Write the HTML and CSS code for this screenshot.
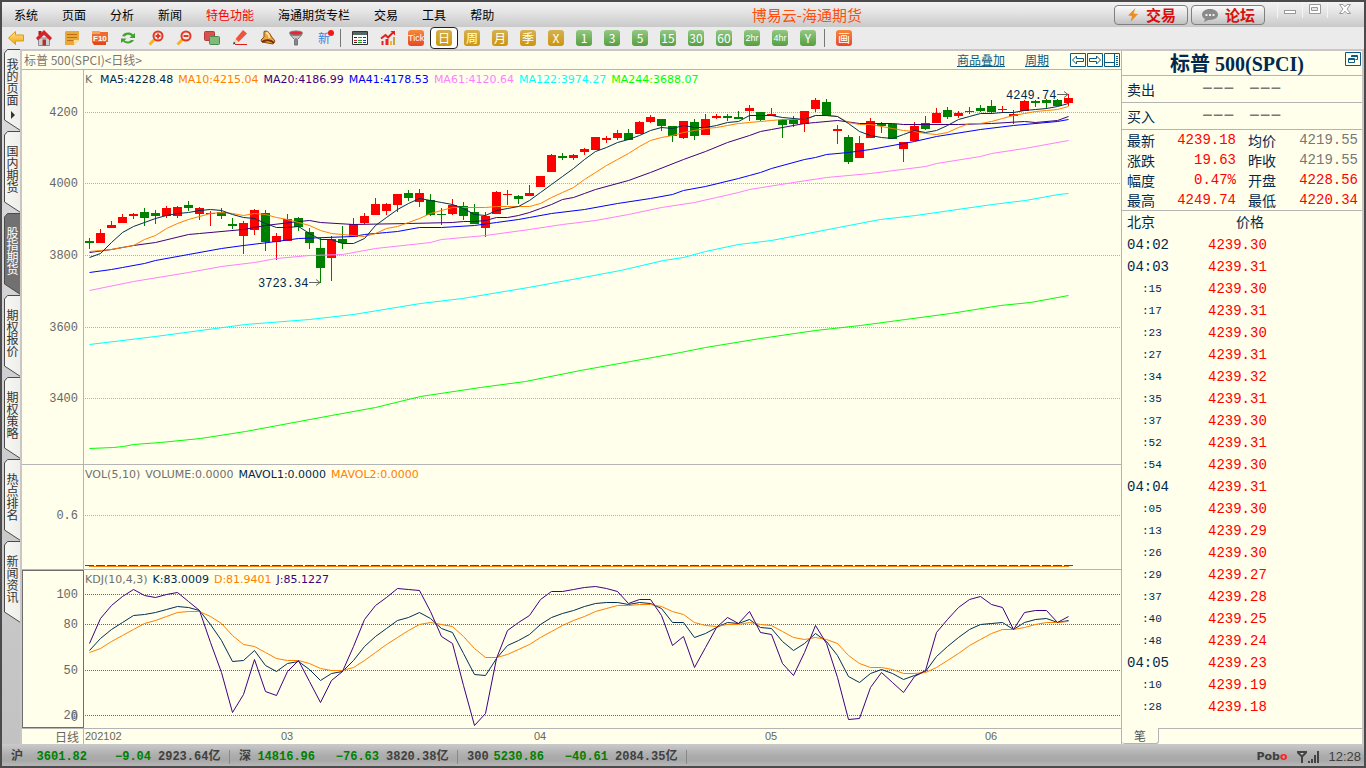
FILE: index.html
```html
<!DOCTYPE html>
<html lang="zh-CN">
<head>
<meta charset="utf-8">
<title>博易云-海通期货</title>
<link rel="stylesheet" href="styles.css">
</head>
<body>
<svg class="defs" aria-hidden="true">
  <defs>
    <linearGradient id="g-gold" x2="0" y2="1"><stop offset="0" stop-color="#ffe680"/><stop offset="1" stop-color="#f2a416"/></linearGradient>
    <linearGradient id="g-tab" x2="1" y2="0"><stop offset="0" stop-color="#f6f6f4"/><stop offset="1" stop-color="#eeeeea"/></linearGradient>
    <symbol id="tab" viewBox="0 0 16 84"><path d="M16.5 .5H3.500L.5 4V71L16.500 81.500" stroke="#4a4a4a"/></symbol>
  </defs>
</svg>
<div class="window">
  <header class="menubar">
    <nav class="menus">
      <button>系统</button><button>页面</button><button>分析</button><button>新闻</button><button class="hot">特色功能</button><button>海通期货专栏</button><button>交易</button><button>工具</button><button>帮助</button>
    </nav>
    <h1 class="app-title">博易云-海通期货</h1>
    <div class="head-actions">
      <button class="pill"><svg width="14" height="16" viewBox="0 0 14 16"><path d="M9.500 1L2 8.500L6 9L4.500 15L12 7L7.500 6.500Z" fill="#f08c1c"/></svg>交易</button>
      <button class="pill"><svg width="18" height="16" viewBox="0 0 18 16"><path d="M9 2C4 2 1 4.500 1 7.500C1 9.500 2.500 11 4 12L3 15L7.500 12.900C13 13.200 17 11 17 7.500C17 4.500 14 2 9 2Z" fill="#8a8a8a"/><path d="M4.500 7h2v2h-2zM8 7h2v2h-2zM11.500 7h2v2h-2z" fill="#eee"/></svg>论坛</button>
    </div>
    <div class="win-ctl">
      <button aria-label="最小化"><svg width="14" height="14" viewBox="0 0 14 14"><rect x="1.500" y="8.500" width="11" height="3" fill="#fff" stroke="#999"/></svg></button>
      <button aria-label="最大化"><svg width="14" height="14" viewBox="0 0 14 14"><path d="M1.500 2.500h11v9h-11zM3.500 5.500h6v3h-6z" fill="#fff" fill-rule="evenodd" stroke="#999"/></svg></button>
      <button aria-label="关闭"><svg width="14" height="14" viewBox="0 0 14 14"><path d="M1.500 2.500h3.500L7 4.800L9 2.500h3.500L9 7l3.500 4.500H9L7 9.200L5 11.500H1.500L5 7Z" fill="#fff" stroke="#999"/></svg></button>
    </div>
  </header>

  <div class="toolbar" role="toolbar">
    <button class="tool" aria-label="后退"><svg viewBox="0 0 16 16"><path d="M.5 8L7.500 1.500V5H15.500V11H7.500V14.500Z" fill="url(#g-gold)" stroke="#dd9a18"/></svg></button>
    <button class="tool" aria-label="主页"><svg viewBox="0 0 16 16"><path d="M2.500 8h11v7.500h-11z" fill="#cfcfd2" stroke="#8a8a8a"/><path d="M2.500 1h3v4h-3z" fill="#a81c22"/><path d="M8 0L0 8L2 10.500L8 5L14 10.500L16 8Z" fill="#d5232a"/><path d="M6.500 9.500h3.500v6H6.500z" fill="#a33"/></svg></button>
    <button class="tool" aria-label="公告"><svg viewBox="0 0 16 16"><path d="M2 1H15V10L10 15H1V2Z" fill="#e8a83a"/><path d="M10 15V10H15Z" fill="#ffe0a0"/><path d="M3 4.500h10M3 7.500h10M3 10.500h6" stroke="#bb6f12"/></svg></button>
    <button class="tool" aria-label="F10"><svg viewBox="0 0 16 16"><path d="M0 2h16v10H0z" fill="#ef6a2e"/><path d="M0 1h8v3H0z" fill="#f7a35b"/><path d="M0 12h14v3H2z" fill="#e04b1c"/><text x="1" y="11" font-size="8" font-weight="700" fill="#fff">F10</text></svg></button>
    <button class="tool" aria-label="刷新"><svg viewBox="0 0 16 16"><path d="M2 6C4 2 10 1.500 13 4.500L15 3V8H9.500L11.500 6C9 4 6 4.500 5 6.500ZM14 10C12 14 6 14.500 3 11.500L1 13V8.500H6.500L4.500 10.500C7 12.300 10 11.500 11 10Z" fill="#41a52d"/></svg></button>
    <button class="tool" aria-label="放大"><svg viewBox="0 0 16 16"><path d="M1.500 14.500L6.500 9.500" stroke="#f6b51e" stroke-width="3"/><circle cx="10" cy="6" r="4.500" fill="#fde9e4" stroke="#df3a26" stroke-width="2"/><path d="M7.500 6h5M10 3.500v5" stroke="#df3a26" stroke-width="2"/></svg></button>
    <button class="tool" aria-label="缩小"><svg viewBox="0 0 16 16"><path d="M1.500 14.500L6.500 9.500" stroke="#f6b51e" stroke-width="3"/><circle cx="10" cy="6" r="4.500" fill="#fde9e4" stroke="#df3a26" stroke-width="2"/><path d="M7.500 6h5" stroke="#df3a26" stroke-width="2"/></svg></button>
    <button class="tool" aria-label="叠加"><svg viewBox="0 0 16 16"><rect x=".5" y="1.500" width="10" height="9" rx="1" fill="#d95050" stroke="#b83a3a"/><rect x="5.500" y="6.500" width="10" height="8" rx="1" fill="#80b97c" stroke="#4a8b4a"/></svg></button>
    <button class="tool" aria-label="画线"><svg viewBox="0 0 16 16"><path d="M11 0L15 3.500L6.500 12L3.500 9Z" fill="#ef5340"/><path d="M3.500 9L6.500 12L1.500 13.500Z" fill="#ffd2a0"/><path d="M1 14.500l2.500-1-1.500-2z" fill="#333"/><path d="M3 14.500h12" stroke="#d81e1e"/></svg></button>
    <button class="tool" aria-label="预警"><svg viewBox="0 0 16 16"><path d="M4 1.500C7 0 10 3 11 6L15 11L13 14L2 12L1 10L4 7Z" fill="#e9a63c" stroke="#8c4a16"/><path d="M6 3C8 3 9 5 9.500 8" stroke="#ffe2a0" stroke-width="2" fill="none"/><path d="M2 12C6 9 11 10 14 13" stroke="#7b2d12" stroke-width="2" fill="none"/></svg></button>
    <button class="tool" aria-label="过滤"><svg viewBox="0 0 16 16"><ellipse cx="8" cy="3" rx="6.500" ry="2" fill="#e23" stroke="#777"/><path d="M2 4.500C4 6 12 6 14 4.500L9.500 9.500V15H6.500V9.500Z" fill="#c8ccd0" stroke="#777"/><path d="M8 8v7" stroke="#444"/></svg></button>
    <button class="tool news" aria-label="新功能">新<i></i></button>
    <span class="sep"></span>
    <button class="tool" aria-label="报价"><svg viewBox="0 0 16 16"><path d="M.5 1.500h15v13H.5z" fill="#fff" stroke="#333"/><path d="M1 2h14v3H1z" fill="#566"/><path d="M2 7.500h3M2 12.500h3" stroke="#222"/><path d="M6 7.500h4M6 10.500h4M6 12.500h4" stroke="#2a9a2a"/><path d="M11 7.500h3M11 10.500h3M11 12.500h3" stroke="#1b3b9c"/><path d="M2 10.500h3" stroke="#d22"/></svg></button>
    <button class="tool" aria-label="走势"><svg viewBox="0 0 16 16"><path d="M1.500 15V11h2v4zM5.500 15V9h3v6z" fill="#e22"/><path d="M10 15v-4h2v4z" fill="#f3b92c"/><path d="M13 15V7h2v8z" fill="#c9a23a"/><path d="M1 8.500L5.500 5L8 7.500L14 1.500" stroke="#e0201a" stroke-width="2" fill="none"/><path d="M10.500 1H15V5.500Z" fill="#e0201a"/></svg></button>
    <button class="tool"><b class="sq orange small">Tick</b></button>
    <button class="tool selected"><b class="sq gold">日</b></button>
    <button class="tool"><b class="sq gold">周</b></button>
    <button class="tool"><b class="sq gold">月</b></button>
    <button class="tool"><b class="sq gold">季</b></button>
    <button class="tool"><b class="sq gold">X</b></button>
    <button class="tool"><b class="sq green">1</b></button>
    <button class="tool"><b class="sq green">3</b></button>
    <button class="tool"><b class="sq green">5</b></button>
    <button class="tool"><b class="sq green">15</b></button>
    <button class="tool"><b class="sq green">30</b></button>
    <button class="tool"><b class="sq green">60</b></button>
    <button class="tool"><b class="sq green small">2hr</b></button>
    <button class="tool"><b class="sq green small">4hr</b></button>
    <button class="tool"><b class="sq green">Y</b></button>
    <span class="sep"></span>
    <button class="tool"><b class="sq orange">画</b></button>
  </div>

  <main class="main">
    <nav class="rail">
      <button class="rtab first"><svg><use href="#tab"/></svg><span>我的页面</span><i class="tri"></i></button>
      <button class="rtab"><svg><use href="#tab"/></svg><span>国内期货</span></button>
      <button class="rtab on"><svg><use href="#tab"/></svg><span>股指期货</span></button>
      <button class="rtab"><svg><use href="#tab"/></svg><span>期权报价</span></button>
      <button class="rtab"><svg><use href="#tab"/></svg><span>期权策略</span></button>
      <button class="rtab"><svg><use href="#tab"/></svg><span>热点排名</span></button>
      <button class="rtab"><svg><use href="#tab"/></svg><span>新闻资讯</span></button>
    </nav>

    <div class="content">
      <section class="charts">
        <div class="chart-head">
          <span class="symbol">标普 500(SPCI)&lt;日线&gt;</span>
          <a href="#" class="overlay-link">商品叠加</a>
          <a href="#" class="period-link">周期</a>
          <span class="head-icons">
            <button aria-label="左移"><svg viewBox="0 0 16 14"><path d="M.5 .5h15v13H.5z"/><path d="M2.500 7L6.500 3V5.500H13.500V8.500H6.500V11Z"/></svg></button>
            <button aria-label="右移"><svg viewBox="0 0 16 14"><path d="M.5 .5h15v13H.5z"/><path d="M13.500 7L9.500 3V5.500H2.500V8.500H9.500V11Z"/></svg></button>
            <button aria-label="布局"><svg viewBox="0 0 16 14"><path d="M.5 .5h15v13H.5zM10.500 .5v13M.5 9.500h10"/><path d="M12 3.500h2M12 5.500h2M12 7.500h2M12 9.500h2M12 11.500h2"/></svg></button>
          </span>
        </div>

        <div class="pane">
          <svg class="axis" viewBox="22 70 61 394" preserveAspectRatio="none">
            <text x="78" y="116">4200</text><text x="78" y="187">4000</text><text x="78" y="259">3800</text><text x="78" y="331">3600</text><text x="78" y="402">3400</text>
          </svg>
          <div class="plot">
            <svg viewBox="84 70 1037 394" preserveAspectRatio="none">
              <path class="grid" d="M85 112.500H1121M85 183.500H1121M85 255.500H1121M85 327.500H1121M85 398.500H1121"/>
              <g id="candles" class="crisp"></g>
              <g id="averages" class="lines"></g>
              <text class="note" x="258" y="287">3723.34</text>
              <path class="pointer" d="M309 282.500H320M316 279.500L320 282.500L316 285.500"/>
              <text class="note" x="1006" y="99">4249.74</text>
              <path class="pointer" d="M1057 94.500H1068M1064 91.500L1068 94.500L1064 97.500"/>
            </svg>
            <div class="legend"><span class="c-dim k-label">K</span><span class="c-navy">MA5:4228.48</span><span class="c-orange">MA10:4215.04</span><span class="c-purple">MA20:4186.99</span><span class="c-blue">MA41:4178.53</span><span class="c-pink">MA61:4120.64</span><span class="c-cyan">MA122:3974.27</span><span class="c-lime">MA244:3688.07</span></div>
          </div>
        </div>

        <div class="pane">
          <svg class="axis" viewBox="22 465 61 104" preserveAspectRatio="none"><text x="78" y="519">0.6</text></svg>
          <div class="plot">
            <svg viewBox="84 465 1037 104" preserveAspectRatio="none">
              <path class="grid" d="M85 515.500H1121"/>
              <g id="volume" class="crisp"></g>
            </svg>
            <div class="legend"><span class="c-dim">VOL(5,10)</span><span class="c-dim">VOLUME:0.0000</span><span class="c-navy">MAVOL1:0.0000</span><span class="c-orange">MAVOL2:0.0000</span></div>
          </div>
        </div>

        <div class="pane">
          <svg class="axis boxed" viewBox="23 571 60 156" preserveAspectRatio="none">
            <text x="78" y="598">100</text><text x="78" y="628">80</text><text x="78" y="674">50</text><text x="78" y="719">20</text><text x="78" y="721">0</text>
          </svg>
          <div class="plot">
            <svg viewBox="84 570 1037 158" preserveAspectRatio="none">
              <path class="grid dark" d="M85 594.500H1121M85 624.500H1121M85 670.500H1121M85 715.500H1121"/>
              <g id="kdj" class="lines"></g>
            </svg>
            <div class="legend"><span class="c-dim">KDJ(10,4,3)</span><span class="c-navy">K:83.0009</span><span class="c-orange">D:81.9401</span><span class="c-purple">J:85.1227</span></div>
          </div>
        </div>

        <div class="dates">
          <span class="unit">日线</span>
          <svg viewBox="84 729 1037 15" preserveAspectRatio="none">
            <text x="85" y="740">202102</text><text x="281" y="740">03</text><text x="534" y="740">04</text><text x="765" y="740">05</text><text x="985" y="740">06</text>
          </svg>
        </div>
      </section>

      <aside class="quote">
        <div class="q-title"><h2>标普 500(SPCI)</h2>
          <button aria-label="弹出"><svg viewBox="0 0 16 14"><path d="M.5 .5h15v13H.5z"/><path d="M6.500 5V3.500H12.500V7.500H10.500M3.500 6.500H9.500V10.500H3.500ZM3.500 7.500h6M6.500 4.500h6"/></svg></button>
        </div>
        <div class="bidask"><span>卖出</span><em>−−−</em><em>−−−</em></div>
        <div class="bidask"><span>买入</span><em>−−−</em><em>−−−</em></div>
        <table class="stats">
          <tr><th>最新</th><td class="up">4239.18</td><th>均价</th><td>4219.55</td></tr>
          <tr><th>涨跌</th><td class="up">19.63</td><th>昨收</th><td>4219.55</td></tr>
          <tr><th>幅度</th><td class="up">0.47%</td><th>开盘</th><td class="up">4228.56</td></tr>
          <tr><th>最高</th><td class="up">4249.74</td><th>最低</th><td class="up">4220.34</td></tr>
        </table>
        <table class="ticks">
          <thead><tr><th>北京</th><th>价格</th></tr></thead>
          <tbody>
            <tr><td>04:02</td><td>4239.30</td></tr>
            <tr><td>04:03</td><td>4239.31</td></tr>
            <tr class="s"><td>:15</td><td>4239.30</td></tr>
            <tr class="s"><td>:17</td><td>4239.31</td></tr>
            <tr class="s"><td>:23</td><td>4239.30</td></tr>
            <tr class="s"><td>:27</td><td>4239.31</td></tr>
            <tr class="s"><td>:34</td><td>4239.32</td></tr>
            <tr class="s"><td>:35</td><td>4239.31</td></tr>
            <tr class="s"><td>:37</td><td>4239.30</td></tr>
            <tr class="s"><td>:52</td><td>4239.31</td></tr>
            <tr class="s"><td>:54</td><td>4239.30</td></tr>
            <tr><td>04:04</td><td>4239.31</td></tr>
            <tr class="s"><td>:05</td><td>4239.30</td></tr>
            <tr class="s"><td>:13</td><td>4239.29</td></tr>
            <tr class="s"><td>:26</td><td>4239.30</td></tr>
            <tr class="s"><td>:29</td><td>4239.27</td></tr>
            <tr class="s"><td>:37</td><td>4239.28</td></tr>
            <tr class="s"><td>:40</td><td>4239.25</td></tr>
            <tr class="s"><td>:48</td><td>4239.24</td></tr>
            <tr><td>04:05</td><td>4239.23</td></tr>
            <tr class="s"><td>:10</td><td>4239.19</td></tr>
            <tr class="s"><td>:28</td><td>4239.18</td></tr>
          </tbody>
        </table>
        <div class="q-tabs"><button>笔</button><span></span></div>
      </aside>
    </div>
  </main>

  <footer class="status">
    <div class="index"><span>沪</span><b>3601.82</b><b>−9.04</b><span class="amt">2923.64亿</span></div>
    <div class="index"><span>深</span><b>14816.96</b><b>−76.63</b><span class="amt">3820.38亿</span></div>
    <div class="index wide"><span>300</span><b>5230.86</b><b>−40.61</b><span class="amt">2084.35亿</span></div>
    <div class="brand">Pob<i>o</i></div>
    <svg class="signal" width="22" height="14" viewBox="0 0 22 14"><path d="M0 1h10v2L6 7v6H4V7L0 3z" fill="#444"/><path d="M3 3h4L5 5z" fill="#ccc"/><path d="M11 11h2v2h-2zM14 9h2v4h-2zM17 5h2v8h-2zM20 1h2v12h-2z" fill="#444"/></svg>
    <time>12:28</time>
  </footer>
</div>
<script src="app.js"></script>
</body>
</html>
```

FILE: styles.css
```css
* { box-sizing: border-box; }
html, body { height: 100%; margin: 0; }
body {
  font-family: "Noto Sans CJK SC", "Liberation Sans", sans-serif;
  font-size: 12px;
  line-height: 16px;
  color: #000;
  overflow: hidden;
}
button {
  font: inherit;
  color: inherit;
  background: none;
  border: 0;
  padding: 0;
  margin: 0;
  cursor: pointer;
}
h1, h2 { margin: 0; font-weight: 400; }
i, em { font-style: normal; }
svg { display: block; }
.defs { position: absolute; width: 0; height: 0; }

.window {
  height: 100vh;
  display: flex;
  flex-direction: column;
  border: 2px solid #4c4a4b;
  background: #d2d2d4;
}

/* menu bar */
.menubar {
  height: 25px;
  flex: none;
  display: flex;
  align-items: center;
  background: linear-gradient(#f2f2f2, #e4e4e4 40%, #c9c9c9);
}
.menus { display: flex; gap: 24px; padding-left: 12px; white-space: nowrap; }
.hot { color: #f00; }
.app-title { font-size: 15px; line-height: 22px; color: #ff4e0c; margin: 0 252px 0 auto; white-space: nowrap; }
.head-actions { display: flex; gap: 3px; margin-right: 12px; }
.pill {
  display: flex;
  align-items: center;
  justify-content: center;
  gap: 6px;
  width: 74px;
  height: 20px;
  font-size: 15px;
  font-weight: 700;
  color: #d8100c;
  border: 1px solid #808080;
  border-radius: 4px;
  background: linear-gradient(#fafafa, #e0e0e0 50%, #c2c2c2);
}
.win-ctl { display: flex; padding-right: 3px; align-self: start; }
.win-ctl button { width: 25px; height: 16px; border-left: 1px solid #f4f4f4; display: flex; justify-content: center; }
.win-ctl button:last-child { width: 34px; }

/* toolbar */
.toolbar { height: 22px; flex: none; display: flex; align-items: center; background: #ebebeb; }
.tool { width: 28px; height: 22px; flex: none; display: flex; align-items: center; justify-content: center; }
.tool svg { width: 16px; height: 16px; }
.tool svg text { font-family: "Liberation Sans", sans-serif; }
.tool.selected { border: 1px solid #222; border-radius: 4px; background: #fff; }
.news { position: relative; color: #3a86e0; }
.news i { position: absolute; right: 4px; top: 3px; width: 6px; height: 6px; border-radius: 50%; background: #f01818; }
.sep { width: 8px; height: 18px; flex: none; background: linear-gradient(#777, #777) 2px 0 / 1px 100% no-repeat; }
.sq {
  width: 16px;
  height: 16px;
  border-radius: 3px;
  font-size: 12px;
  line-height: 16px;
  font-weight: 400;
  text-align: center;
  color: #fff;
  overflow: hidden;
}
.gold { background: linear-gradient(#d3b155, #cf9509); }
.green { background: linear-gradient(#93c883, #55a040); }
.orange { background: linear-gradient(#f58a3c, #ea4524); }
.sq.small { font-family: "Liberation Sans", sans-serif; font-size: 9px; }

/* main frame */
.main { flex: 1; min-height: 0; display: flex; }
.rail {
  width: 18px;
  flex: none;
  padding-left: 2px;
  background: linear-gradient(#dcdce0, #c2c2c2);
}
.rtab {
  position: relative;
  display: flex;
  align-items: flex-start;
  width: 16px;
  height: 82px;
  padding-top: 14px;
  color: #333;
}
.rtab svg { position: absolute; left: 0; top: 0; width: 16px; height: 84px; fill: url(#g-tab); }
.rtab span { position: relative; writing-mode: vertical-rl; line-height: 16px; height: 48px; }
.rtab.first { padding-top: 9px; }
.rtab.on { color: #fff; }
.rtab.on svg { fill: #717171; }
.tri { position: absolute; left: 7px; top: 62px; border: 4px solid transparent; border-left-color: #333; border-right: 0; }

.content {
  flex: 1;
  min-width: 0;
  display: flex;
  border: 2px solid #ccc5c5;
  border-bottom: 0;
  background: #ffffeb;
}
.charts {
  flex: 1;
  min-width: 0;
  display: grid;
  grid-template-rows: 19px minmax(0, 395fr) minmax(0, 105fr) minmax(0, 159fr) 15px;
}
.chart-head { display: flex; align-items: center; border-bottom: 1px solid #b4b4b4; padding-left: 2px; color: #777; }
.symbol { flex: 1; }
.chart-head a { color: #0b5a86; }
.overlay-link { margin-right: 20px; }
.period-link { margin-right: 21px; }
.head-icons { display: flex; gap: 1px; margin-right: 1px; }
.head-icons svg, .q-title svg { width: 16px; height: 14px; fill: none; stroke: #0b5a86; }

.pane { display: grid; grid-template-columns: 62px minmax(0, 1fr); border-bottom: 1px solid #b4b4b4; }
.axis { width: 100%; height: 100%; border-right: 1px solid #b4b4b4; min-height: 0; }
.axis text { font: 12px "Liberation Mono", monospace; fill: #666; text-anchor: end; }
.axis.boxed { border: 1px solid #6e6e6e; }
.plot { display: grid; min-width: 0; min-height: 0; }
.plot > * { grid-area: 1 / 1; min-width: 0; min-height: 0; }
.plot svg { width: 100%; height: 100%; }
.grid { fill: none; stroke: #b2b2a8; stroke-dasharray: 1 1; shape-rendering: crispEdges; }
.grid.dark { stroke: #6a6a62; }
.crisp { shape-rendering: crispEdges; }
.lines polyline { fill: none; stroke-width: 1; }
.note { font: 12px "Liberation Mono", monospace; fill: #002850; }
.pointer { fill: none; stroke: #666; }
.legend {
  display: flex;
  gap: 5px;
  padding-left: 1px;
  font-family: "DejaVu Sans", sans-serif;
  font-size: 11px;
  line-height: 19px;
  white-space: nowrap;
  align-self: start;
}
.k-label { width: 10px; }
.c-dim { color: #707070; }
.c-navy { color: #002850; }
.c-orange { color: #ff8000; }
.c-purple { color: #400080; }
.c-blue { color: #00f; }
.c-pink { color: #ff80ff; }
.c-cyan { color: #0ff; }
.c-lime { color: #0f0; }
.dates { display: grid; grid-template-columns: 62px minmax(0, 1fr); color: #666; }
.unit { text-align: right; padding-right: 4px; line-height: 15px; border-right: 1px solid #b4b4b4; }
.dates svg { width: 100%; height: 15px; }
.dates text { font: 11px "Liberation Sans", sans-serif; fill: #666; }

/* quote panel */
.quote {
  width: 241px;
  flex: none;
  display: flex;
  flex-direction: column;
  border-left: 1px solid #b4b4b4;
  color: #002850;
  font-size: 14px;
}
.q-title { height: 25px; flex: none; display: grid; grid-template-columns: 16px 1fr 16px; padding: 1px 1px 0; border-bottom: 1px solid #b4b4b4; }
.q-title h2 { grid-column: 2; font: 700 20px/24px "Liberation Serif", "Noto Sans CJK SC", serif; text-align: center; padding-right: 10px; }
.q-title button { align-self: start; }
.bidask { height: 27px; flex: none; display: flex; align-items: center; padding-left: 5px; border-bottom: 1px solid #b4b4b4; }
.bidask span { width: 75px; }
.bidask em { width: 47px; font: 18px/20px "Liberation Mono", monospace; color: #777; }
table { border-collapse: collapse; }
th, td { padding: 0; font-weight: 400; text-align: left; }
td { font-family: "Liberation Mono", monospace; }
.stats { table-layout: fixed; width: 100%; height: 81px; flex: none; border-bottom: 1px solid #b4b4b4; }
.stats th { width: 40px; padding-left: 5px; line-height: 20px; height: 20px; }
.stats th:nth-child(3) { width: 53px; padding-left: 12px; }
.stats td { width: 74px; text-align: right; color: #777; }
.stats td:last-child { width: auto; padding-right: 4px; }
.stats .up, .ticks td:last-child { color: #f00; }
.ticks { flex: none; }
.ticks td, .ticks th { height: 22px; padding-left: 5px; line-height: 20px; }
.ticks th { height: 23px; vertical-align: top; }
.ticks th:first-child, .ticks td:first-child { width: 86px; }
.ticks th:last-child { padding-left: 28px; }
.ticks td:last-child { padding-left: 0; }
.ticks .s td:first-child { font-size: 11px; padding-left: 20px; }
.q-tabs { height: 16px; margin-top: auto; flex: none; display: flex; font-size: 12px; color: #555; }
.q-tabs button { width: 37px; line-height: 15px; border: 1px solid #b4b4b4; border-width: 0 1px 1px 0; border-radius: 0 0 3px 3px; }
.q-tabs span { flex: 1; border-top: 1px solid #b4b4b4; }

/* status bar */
.status {
  height: 22px;
  flex: none;
  display: flex;
  align-items: center;
  padding: 3px 3px 0 9px;
  background: linear-gradient(#cacaca, #adadad 50%, #a8a8a8 75%, #b8b8b8);
  color: #404040;
  font-family: "Liberation Mono", "Noto Sans CJK SC", monospace;
  font-weight: 700;
}
.index { display: flex; margin-right: 9px; border-right: 1px solid #888; line-height: 14px; white-space: nowrap; }
.index span:first-child { width: 12px; }
.index b { width: 64px; text-align: right; color: #008000; }
.index .amt { width: 78px; padding-left: 7px; }
.index.wide span:first-child { width: 22px; }
.index.wide b:nth-of-type(1) { width: 55px; }
.brand { margin-left: auto; font-family: "DejaVu Sans", sans-serif; font-size: 11px; }
.brand i { color: #f22; }
.signal { margin: 0 9px 0 10px; }
time { font: 13px "Liberation Sans", sans-serif; }
```

FILE: app.js
```js
(function () {
  var NS = "http://www.w3.org/2000/svg";
  var X0 = 89, STEP = 11;
  var COLORS = { r: "#ff0000", g: "#008000" };

  function add(parent, name, attrs) {
    var el = document.createElementNS(NS, name);
    for (var k in attrs) el.setAttribute(k, attrs[k]);
    parent.appendChild(el);
  }

  // direction, high, body top, body bottom, low
  var candles = ("g238,241,243,249 r229,233,243,243 r221,225,228,228 r214,217,223,223 r213,214,216,219 " +
    "g208,212,218,226 g210,213,216,224 r206,208,216,218 r206,207,216,218 g201,205,208,211 " +
    "r207,208,214,220 r211,213,214,226 g208,212,216,219 g218,224,226,229 r221,223,236,254 " +
    "r209,210,230,235 g210,213,242,251 r233,236,242,260 r214,219,241,241 g217,218,227,231 " +
    "g228,232,243,249 g238,248,268,283 r236,239,258,281 g226,239,243,249 r218,224,237,237 " +
    "r213,216,223,224 r198,204,215,215 r203,204,211,215 r194,194,205,212 g190,193,198,201 " +
    "r189,193,202,207 g194,200,215,216 g208,214,215,225 r199,205,214,215 g202,206,216,220 " +
    "g204,212,224,224 r212,216,228,237 r191,192,214,214 r190,194,195,205 g195,196,199,204 " +
    "r185,193,196,196 r176,176,187,187 r154,155,172,172 g153,156,158,160 r154,155,158,160 " +
    "r148,149,152,155 r137,137,150,150 r136,138,140,143 r130,133,138,140 g129,133,140,140 " +
    "r121,122,134,134 r115,117,122,123 g119,119,126,131 g126,126,136,142 r121,121,138,139 " +
    "g119,122,136,140 r114,119,135,135 r114,116,118,119 g114,116,118,121 g111,117,119,119 " +
    "r105,108,111,121 g112,112,120,121 r108,114,116,116 g119,120,125,138 g116,120,124,127 " +
    "r111,111,124,132 r98,100,109,112 g99,102,116,116 r125,129,131,144 g135,137,162,164 " +
    "r136,143,158,158 r118,121,138,138 g122,124,126,133 g124,124,139,139 r142,142,149,162 " +
    "r122,126,141,141 g116,123,129,130 r108,113,123,123 g107,110,117,119 r111,113,116,118 " +
    "g107,111,112,114 g105,108,111,112 g100,106,112,114 r106,109,110,113 r110,114,116,124 " +
    "r100,101,111,111 g100,101,103,107 g99,100,103,109 g99,100,106,106 r94,98,103,106").split(" ");

  var box = document.getElementById("candles");
  var vol = document.getElementById("volume");
  add(vol, "rect", { x: X0, y: 566, width: 980, height: 1, fill: "#ff8000" });
  candles.forEach(function (c, i) {
    var fill = COLORS[c.charAt(0)], v = c.slice(1).split(",").map(Number), x = X0 + STEP * i;
    add(box, "rect", { x: x, y: v[0], width: 1, height: v[3] - v[0], fill: fill });
    add(box, "rect", { x: x - 4, y: v[1], width: 9, height: v[2] - v[1], fill: fill });
    add(vol, "rect", { x: x - 4, y: 565, width: 9, height: 1, fill: fill });
  });

  // one value for each candle
  function series(id, color, text) {
    var pts = text.split(" ").map(function (y, i) { return (X0 + 0.5 + STEP * i) + "," + (+y + 0.5); });
    add(document.getElementById(id), "polyline", { points: pts.join(" "), stroke: color });
  }
  // explicit x,y vertices
  function curve(color, points) {
    add(document.getElementById("averages"), "polyline", { points: points, stroke: color, transform: "translate(.5 .5)" });
  }

  curve("#00ff00", "89,448 113,447 123,446 133,444 160,442 200,438 245,431 331,415 375,407 420,396 480,387 525,381 580,370 630,361 680,352 705,347 760,338 815,330 860,325 905,319 950,313 1000,305 1030,302 1068,295");
  curve("#00ffff", "89,344 155,336 245,324 309,319 353,314 420,303 462,298 528,287 572,279 620,270 663,260 683,257 705,251 738,244 771,240 838,227 880,219 915,215 957,209 992,204 1025,200 1058,194 1068,193");
  curve("#ff80ff", "89,290 133,281 188,272 221,266 254,262 276,258 309,255 342,254 375,248 430,242 441,239 485,235 529,229 562,224 595,220 628,214 661,207 694,202 716,197 738,192 749,189 793,182 826,177 870,173 925,166 936,163 980,156 991,153 1024,148 1068,140");
  curve("#0000ff", "89,272 111,269 122,267 144,263 155,260 188,254 221,248 243,245 276,241 298,238 353,236 364,234 386,232 397,231 419,227 441,227 474,225 496,222 518,219 529,217 551,213 584,209 617,203 650,198 672,194 683,190 705,186 738,178 749,175 760,172 771,168 804,159 815,157 826,154 848,152 870,149 914,141 936,136 980,129 1013,125 1057,121 1068,119");
  curve("#400080", "89,252 111,249 133,245 155,242 188,234 199,233 243,229 265,225 298,221 309,220 320,222 353,224 408,223 452,222 463,221 474,221 485,220 496,217 507,217 518,215 529,212 540,208 551,204 562,199 573,197 584,193 595,189 628,180 650,172 683,159 705,151 727,142 749,135 760,131 771,129 793,125 804,123 815,122 837,120 859,123 892,123 903,124 958,124 991,123 1024,121 1035,122 1057,120 1068,116");

  series("averages", "#ff8000", "251 250 249 247 245 239 235 228 223 219 216 213 212 213 215 213 214 217 219 222 225 230 233 234 235 236 233 228 226 222 218 213 210 207 207 207 207 206 206 206 206 203 197 192 187 179 172 165 159 153 146 140 137 135 132 130 128 127 125 123 122 121 120 119 119 119 115 115 116 122 124 124 126 128 130 131 133 134 132 127 123 123 121 118 115 113 111 110 109 106");
  series("averages", "#002f55", "257 253 242 232 226 222 218 215 213 212 210 209 210 214 217 218 223 227 227 226 233 239 239 243 243 238 225 217 209 203 198 200 202 204 208 214 215 210 208 206 200 192 184 176 168 159 151 147 142 139 135 130 127 128 125 127 127 125 122 121 115 115 115 117 118 119 115 115 116 123 131 135 137 138 134 130 132 130 125 119 116 113 113 112 112 110 109 108 106 103");

  series("kdj", "#002f55", "650 638 629 622 615 614 612 609 606 607 610 624 640 661 660 650 665 671 663 661 669 680 673 671 660 646 636 628 620 617 612 618 628 632 653 674 675 658 645 640 634 624 617 613 610 606 603 602 602 604 602 603 608 622 622 637 633 627 622 623 619 627 628 641 650 643 633 641 655 676 682 673 669 673 679 675 671 656 646 637 629 624 623 622 629 622 619 618 622 620");
  series("kdj", "#ff8000", "652 648 641 635 629 623 620 616 612 611 611 616 623 635 644 646 652 658 660 660 663 668 670 670 667 660 652 644 637 630 624 622 624 626 636 648 657 657 654 649 644 637 631 625 620 616 611 608 605 605 604 604 606 611 614 622 625 626 624 624 622 624 625 631 637 639 637 639 643 655 663 667 667 669 673 673 672 667 660 653 645 639 633 629 629 627 624 622 622 621");
  series("kdj", "#400080", "643 618 605 596 589 595 597 594 592 601 610 642 672 712 694 659 691 695 671 660 681 702 680 671 646 619 605 597 588 589 590 611 636 643 685 725 713 658 630 622 615 599 591 591 589 587 586 588 591 603 599 599 615 645 636 667 647 627 617 623 611 632 634 663 675 652 625 643 677 719 718 687 672 682 692 676 670 632 619 607 599 596 604 607 629 612 610 610 622 616");
})();
```
